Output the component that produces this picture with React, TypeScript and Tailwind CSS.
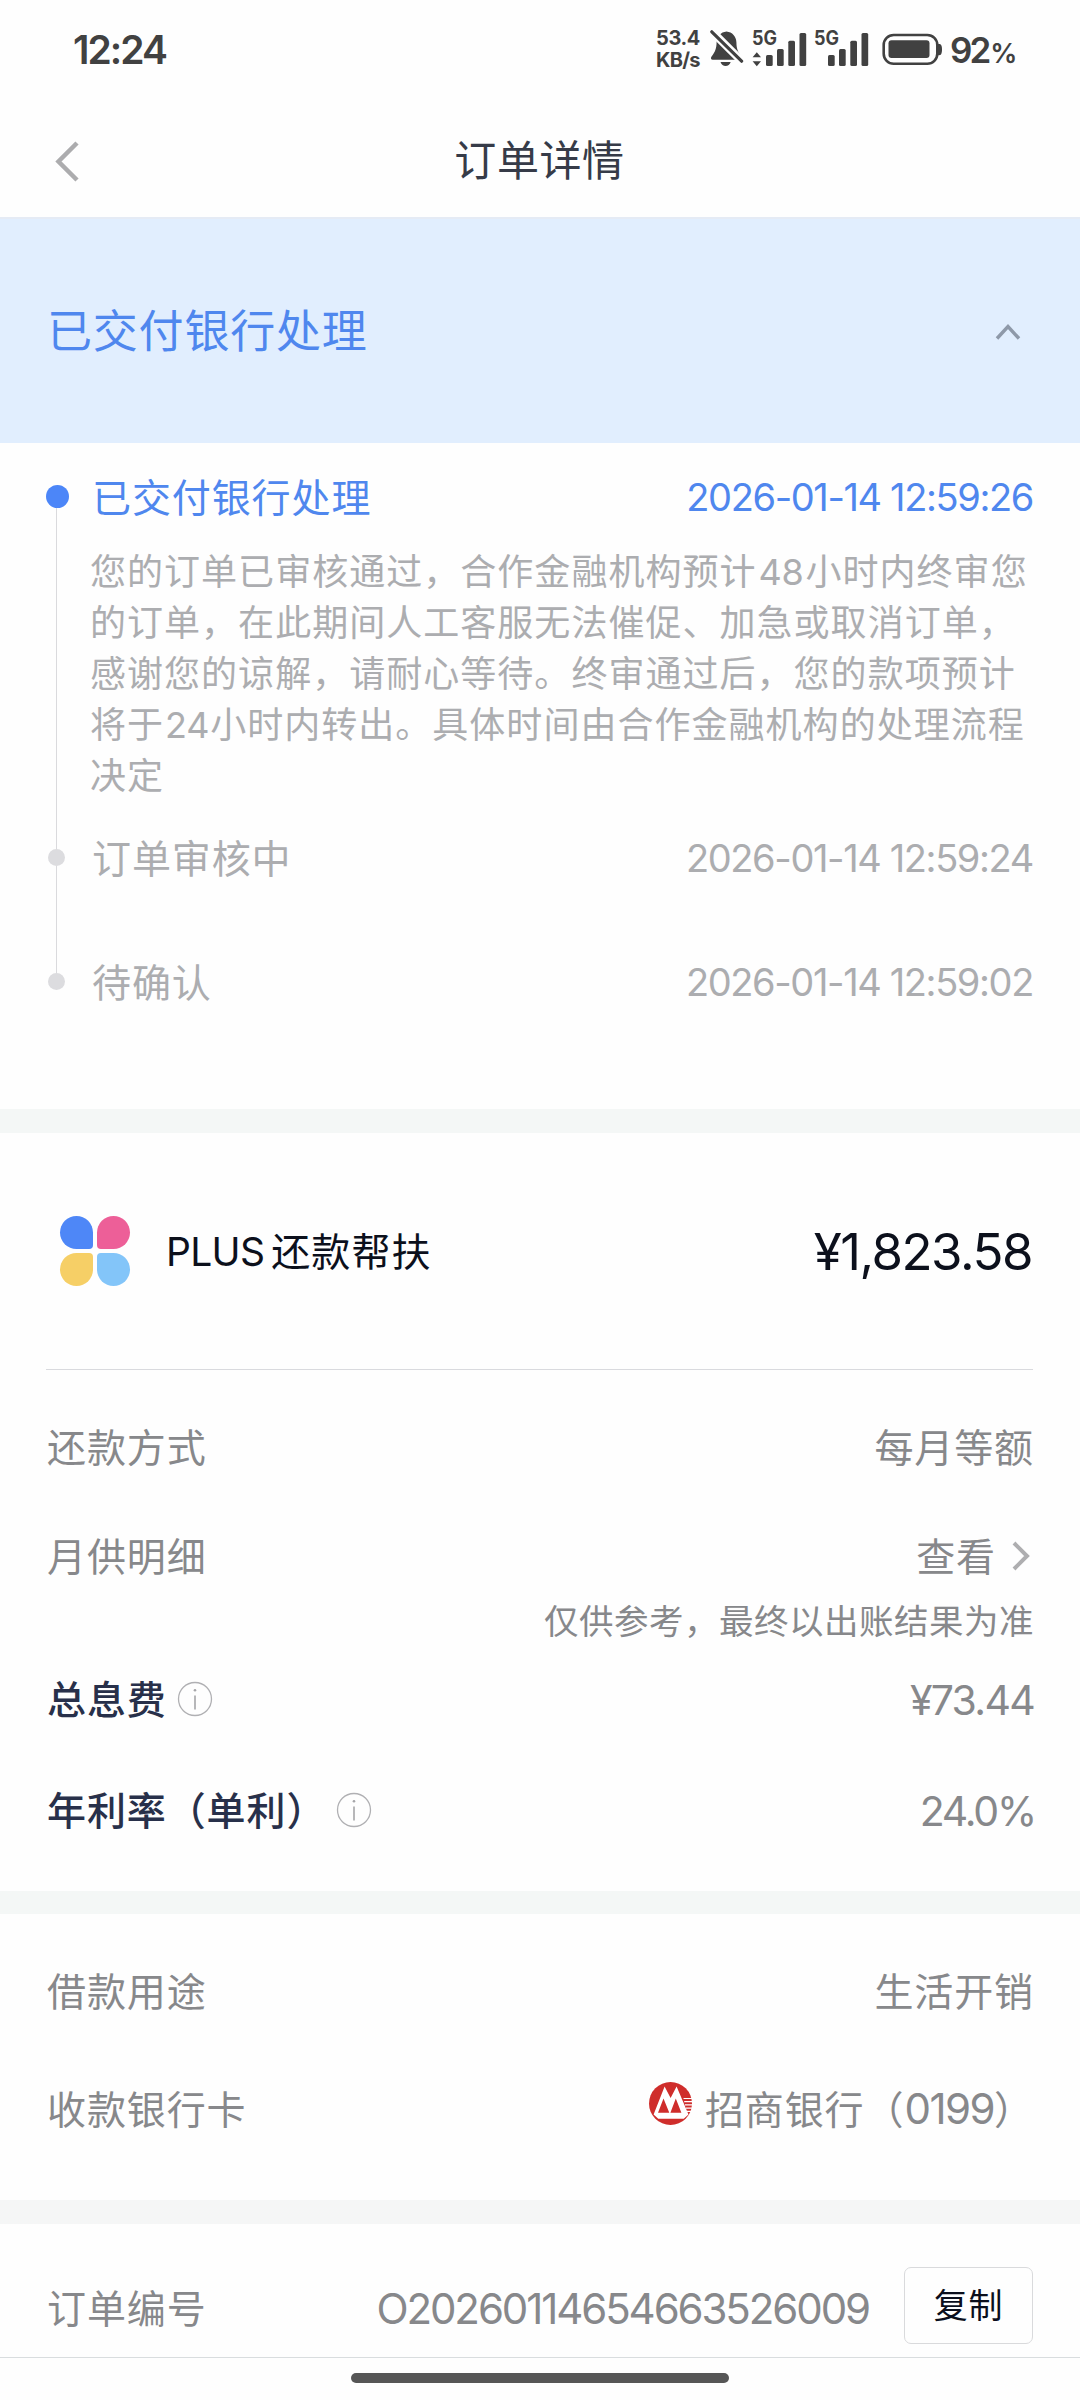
import type { ReactNode } from 'react';
import clsx from 'clsx';

const timeline = [
  {
    title: '已交付银行处理',
    time: '2026-01-14 12:59:26',
    active: true,
  },
  { title: '订单审核中', time: '2026-01-14 12:59:24', active: false },
  { title: '待确认', time: '2026-01-14 12:59:02', active: false },
];

function Signal({ data }: { data?: boolean }) {
  return (
    <svg className="overflow-visible" width="55" height="38" viewBox="0 0 55 38" fill="#414141">
      <text x="0" y="15" fontSize="19.5" fontWeight="700" textLength="25" lengthAdjust="spacingAndGlyphs">5G</text>
      {data && <path d="M4.8 22.3l4.2 4.9H.6zM4.8 36.2L.6 31.2H9z" />}
      <rect x="14" y="25" width="6.7" height="11" rx="1.5" />
      <rect x="25" y="19" width="6.7" height="17" rx="1.5" />
      <rect x="36.3" y="10.8" width="6.7" height="25.2" rx="1.5" />
      <rect x="47.5" y="3" width="6.7" height="33" rx="1.5" />
    </svg>
  );
}

function StatusBar() {
  return (
    <div className="flex h-[103px] items-start justify-between pl-[73px] pr-[65px] pt-[30px] text-[#414141]">
      <span className="text-[39px] font-semibold leading-[40px] tracking-[-2px]">12:24</span>
      <div className="flex items-start">
        <div className="-mt-[3px] mr-[11px] w-[43px] whitespace-nowrap text-[20px] font-bold leading-[22px]">
          <div className="tracking-[-0.4px]">53.4</div>
          <div className="tracking-[-0.7px]">KB/s</div>
        </div>
        <svg className="mr-[8px]" width="34" height="38" viewBox="0 0 34 38">
          <path
            d="M16.5 1.6c-5.8.6-9.7 5-9.9 10.6-.1 6.4-1.4 9.6-5.2 14.6-.9 1.3-.4 2.9 1.3 2.9h27.6c1.6 0 2.2-1.5 1.3-2.8-3.9-5.2-5.1-8.5-5.2-14.7-.2-5.7-4.1-10-9.9-10.6z"
            fill="#414141"
          />
          <path d="M10.5 32h10.2c-.9 2.6-2.8 4-5.1 4s-4.2-1.4-5.1-4z" fill="#414141" />
          <path d="M-1-1.5L34 33.5" stroke="#fefefe" strokeWidth="8" />
          <path d="M1.8 1.8L31.6 31.2" stroke="#414141" strokeWidth="3.2" strokeLinecap="round" />
        </svg>
        <div className="flex gap-[7px]">
          <Signal data />
          <Signal />
        </div>
        <svg className="ml-[13px] mr-[7px]" width="61" height="38" viewBox="0 0 61 38">
          <rect x="1.7" y="5" width="53.6" height="28.8" rx="10" fill="none" stroke="#414141" strokeWidth="2.6" />
          <rect x="6.5" y="10.3" width="41" height="17.7" rx="3" fill="#414141" />
          <path d="M55.5 14h1.8c1.6 0 2.7 1.5 2.7 5.6s-1.1 5.7-2.7 5.7h-1.8z" fill="#414141" />
        </svg>
        <span className="w-[65px] whitespace-nowrap text-[35px] font-semibold leading-[40px] tracking-[-3px]">
          92<span className="ml-[2px] text-[27px]">%</span>
        </span>
      </div>
    </div>
  );
}

function InfoIcon() {
  return (
    <svg className="ml-[10px]" width="36" height="36" viewBox="0 0 36 36">
      <circle cx="18" cy="18" r="16.5" fill="none" stroke="#b0b0b3" strokeWidth="1.3" />
      <path d="M18 14.5v14" stroke="#a5a5a8" strokeWidth="1.6" />
      <circle cx="18" cy="9.3" r="1.3" fill="#a5a5a8" />
    </svg>
  );
}

function BankLogo() {
  return (
    <svg className="-mt-[11px] mr-[13px]" width="43" height="43" viewBox="0 0 43 43">
      <circle cx="21.5" cy="21.5" r="21.5" fill="#cf2d2b" />
      <path d="M15.6 4.6L4.6 32.5l4.7 4.2h25.4l4.8-4.2L27.6 4.6l-6 11.4z" fill="#fff" />
      <path d="M14.5 16.5L9 30.8h11.3zM26.8 16.5l-5.4 14.3h11z" fill="#cf2d2b" />
      <path d="M34.5 16.5H43M35.2 19.7H43M36 22.9H43M37 26.1H43M38 29.3H42" stroke="#fff" strokeWidth="1.2" />
    </svg>
  );
}

function Row({ label, strong, className, children }: { label: ReactNode; strong?: boolean; className?: string; children: ReactNode }) {
  return (
    <div className={clsx('flex h-[90px] items-center justify-between text-[39px] tracking-[0.9px] text-[#87888b]', className)}>
      <div className={clsx('flex items-center', strong && 'font-medium text-[#28304a]')}>{label}</div>
      <div className="-mr-px flex items-center">{children}</div>
    </div>
  );
}

export default function App() {
  return (
    <div className="h-[2400px] w-[1080px] overflow-hidden bg-[#fefefe] font-['Inter','Noto_Sans_CJK_SC',sans-serif] leading-none">
      <StatusBar />

      <header className="flex h-[114px] items-center px-[54px]">
        <svg className="mt-[2px]" width="26" height="42" viewBox="0 0 26 42" fill="none" stroke="#acacae" strokeWidth="4.5">
          <path d="M23 3L4.5 21.5 23 40" />
        </svg>
        <h1 className="flex-1 pr-[27px] pt-[2px] text-center text-[42px] tracking-[0.6px] text-[#363b48]">订单详情</h1>
      </header>

      <div className="flex h-[226px] items-center justify-between border-t-2 border-[#e5ebf5] bg-[#e1eefe] pl-[47px] pr-[58px]">
        <span className="text-[45px] tracking-[0.8px] text-[#4f87ee]">已交付银行处理</span>
        <svg className="mt-[2px]" width="28" height="18" viewBox="0 0 28 18" fill="none" stroke="#8e99a9" strokeWidth="3.4">
          <path d="M3 15.5L14 3.5l11 12" />
        </svg>
      </div>

      <section className="h-[666px] pl-[46px] pr-[47px] pt-[42px]">
        {timeline.map((item, i) => (
          <div key={item.title} className="flex">
            <div className="flex w-[23px] shrink-0 flex-col items-center">
              <div className={clsx('shrink-0 rounded-full', item.active ? 'size-[23px] bg-[#4c86f8]' : 'mr-[2px] size-[17px] bg-[#dcdcdf]')} />
              {i < timeline.length - 1 && <div className="mr-[2px] w-px flex-1 bg-[#dadadd]" />}
            </div>
            <div className={clsx('ml-[20px] flex-1', i === 1 && 'h-[124px]')}>
              <div
                className={clsx(
                  'flex items-center justify-between pl-[3px]',
                  item.active ? 'h-[23px] text-[#4f87ee]' : 'h-[17px] text-[#acadb0]'
                )}
              >
                <span className="pt-[2px] text-[39px] tracking-[0.9px]">{item.title}</span>
                <span className="text-[38px] tracking-[-1.38px]">{item.time}</span>
              </div>
              {item.active && (
                <p className="whitespace-nowrap pb-[47px] pl-px pt-[39px] text-[36px] leading-[51px] tracking-[1.03px] text-[#acadb0]">
                  您的订单已审核通过，合作金融机构预计<span className="mx-[2px] tracking-[-0.3px]">48</span>小时内终审您
                  <br />
                  的订单，在此期间人工客服无法催促、加急或取消订单，
                  <br />
                  感谢您的谅解，请耐心等待。终审通过后，您的款项预计
                  <br />
                  将于<span className="mx-px tracking-[-0.3px]">24</span>小时内转出。具体时间由合作金融机构的处理流程
                  <br />
                  决定
                </p>
              )}
            </div>
          </div>
        ))}
      </section>

      <div className="h-[24px] bg-[#f4f7f6]" />

      <section className="h-[758px] px-[47px]">
        <div className="-ml-px flex h-[237px] items-center border-b border-[#d9dade] text-[#0c101c]">
          <div className="ml-[14px] grid grid-cols-2 gap-[4px]">
            <div className="size-[33px] rounded-[17px] rounded-br-[4px] bg-[#4e87f7]" />
            <div className="size-[33px] rounded-[17px] rounded-bl-[4px] bg-[#ed5f98]" />
            <div className="size-[33px] rounded-[17px] rounded-tr-[4px] bg-[#f6cf66]" />
            <div className="size-[33px] rounded-[17px] rounded-tl-[4px] bg-[#83c5f9]" />
          </div>
          <span className="ml-[36px] flex-1 text-[39px] tracking-[1.1px]">
            <span className="mr-[7px] tracking-[-0.7px]">PLUS</span>还款帮扶
          </span>
          <span className="mr-px text-[51px] tracking-[-1.5px]">¥1,823.58</span>
        </div>

        <Row label="还款方式" className="mt-[32px]">每月等额</Row>
        <Row label="月供明细" className="mt-[19px]">
          查看
          <svg className="ml-[16px] mr-[3px]" width="19" height="30" viewBox="0 0 19 30" fill="none" stroke="#aeaeb0" strokeWidth="4">
            <path d="M2 2l13 13L2 28" />
          </svg>
        </Row>
        <div className="-mr-px flex h-[42px] items-center justify-end whitespace-nowrap text-[34.5px] tracking-[0.5px] text-[#87888b]">
          仅供参考，最终以出账结果为准
        </div>
        <Row strong className="mt-[11px]" label={<>总息费<InfoIcon /></>}>
          <span className="mt-[2px] text-[41px] tracking-[-1.7px]">¥73.44</span>
        </Row>
        <Row strong className="mt-[21px]" label={<>年利率（单利）<InfoIcon /></>}>
          <span className="-mr-px mt-[2px] text-[41px] tracking-[-2.2px]">24.0%</span>
        </Row>
      </section>

      <div className="h-[23px] bg-[#f4f7f6]" />

      <section className="h-[286px] px-[47px] pt-[32px]">
        <Row label="借款用途">生活开销</Row>
        <Row label="收款银行卡" className="mt-[28px]">
          <BankLogo />
          招商银行（<span className="text-[42px] tracking-[-1.5px]">0199</span>）
        </Row>
      </section>

      <div className="h-[24px] bg-[#f5f6f6]" />

      <section className="h-[133px] px-[47px] pt-[39px]">
        <Row label="订单编号">
          <span className="mt-[2px] text-[42px] tracking-[-2.1px]">O20260114654663526009</span>
          <button className="-mt-[5px] ml-[35px] mr-px h-[77px] w-[129px] rounded-[7px] border border-[#d9dadc] text-[34px] tracking-[0.8px] text-[#0b0f1c]">
            复制
          </button>
        </Row>
      </section>

      <footer className="border-t border-[#d9dddf] pt-[15px]">
        <div className="mx-auto h-[10px] w-[378px] rounded-full bg-[#565656]" />
      </footer>
    </div>
  );
}
